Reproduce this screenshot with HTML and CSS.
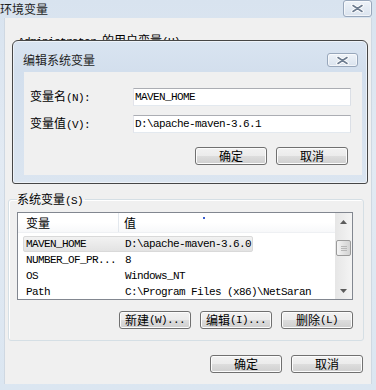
FILE: index.html
```html
<!DOCTYPE html>
<html lang="zh-CN">
<head>
<meta charset="utf-8">
<title>环境变量</title>
<link rel="stylesheet" href="styles.css">
</head>
<body>
<div class="win">
  <div class="titlebar">
    <span class="title">环境变量</span>
    <span class="close close-outer">
      <svg width="15" height="9" viewBox="0 0 15 9"><path d="M3 1.5 L12 7.5 M12 1.5 L3 7.5" stroke="#fff" stroke-width="3.4" stroke-linecap="round"/><path d="M3 1.5 L12 7.5 M12 1.5 L3 7.5" stroke="#6d7c90" stroke-width="1.6" stroke-linecap="round"/></svg>
    </span>
  </div>
  <div class="client">
    <div class="user-label"><span class="m">Administrator </span>的用户变量<span class="m">(U)</span></div>
    <div class="user-group"></div>
    <fieldset class="group">
      <legend>系统变量<span class="m">(S)</span></legend>
      <div class="list">
        <div class="lv-body">
          <div class="lv-head">
            <div class="hc1">变量</div>
            <div class="hc2">值</div>
          </div>
          <div class="lv-row sel"><div class="c1 m">MAVEN_HOME</div><div class="c2 m">D:\apache-maven-3.6.0</div></div>
          <div class="lv-row"><div class="c1 m">NUMBER_OF_PR...</div><div class="c2 m">8</div></div>
          <div class="lv-row"><div class="c1 m">OS</div><div class="c2 m">Windows_NT</div></div>
          <div class="lv-row"><div class="c1 m">Path</div><div class="c2 m">C:\Program Files (x86)\NetSaran</div></div>
          <span class="dot"></span>
        </div>
        <div class="vscroll">
          <div class="arrow"><svg width="7" height="4" viewBox="0 0 7 4"><path d="M0 4 L3.5 0 L7 4 Z" fill="#5b5b5b"/></svg></div>
          <div class="thumb"><span></span><span></span><span></span></div>
          <div class="track"></div>
          <div class="arrow"><svg width="7" height="4" viewBox="0 0 7 4"><path d="M0 0 L7 0 L3.5 4 Z" fill="#5b5b5b"/></svg></div>
        </div>
      </div>
      <div class="btnrow">
        <button class="btn">新建<span class="m">(W)...</span></button>
        <button class="btn">编辑<span class="m">(I)...</span></button>
        <button class="btn">删除<span class="m">(L)</span></button>
      </div>
    </fieldset>
    <div class="btnrow bottom">
      <button class="btn">确定</button>
      <button class="btn">取消</button>
    </div>
  </div>

  <div class="dlg">
    <div class="dlg-title">
      <span class="dlg-caption">编辑系统变量</span>
      <span class="close close-dlg">
        <svg width="15" height="9" viewBox="0 0 15 9"><path d="M3 1.5 L12 7.5 M12 1.5 L3 7.5" stroke="#fff" stroke-width="3.4" stroke-linecap="round"/><path d="M3 1.5 L12 7.5 M12 1.5 L3 7.5" stroke="#6d7c90" stroke-width="1.6" stroke-linecap="round"/></svg>
      </span>
    </div>
    <div class="dlg-client">
      <div class="field">
        <label class="lbl">变量名<span class="m">(N):</span></label>
        <input class="tb m" type="text" value="MAVEN_HOME">
      </div>
      <div class="field second">
        <label class="lbl">变量值<span class="m">(V):</span></label>
        <input class="tb m" type="text" value="D:\apache-maven-3.6.1">
      </div>
      <div class="btnrow dlg-btns">
        <button class="btn">确定</button>
        <button class="btn">取消</button>
      </div>
    </div>
  </div>
</div>
</body>
</html>
```

FILE: styles.css
```css
* { box-sizing: border-box; }
html, body { margin: 0; padding: 0; }
body {
  width: 376px;
  height: 390px;
  overflow: hidden;
  font: 12px/14px "Noto Sans CJK SC", sans-serif;
  color: #000;
  background: #dfe8f2;
}
.m {
  font-family: "Liberation Mono", "Noto Sans CJK SC", monospace;
  font-size: 11px;
  letter-spacing: -0.6px;
}

/* outer window */
.win {
  position: relative;
  width: 376px;
  height: 390px;
  display: flex;
  flex-direction: column;
  padding: 0 4px 6px 4px;
  background: linear-gradient(#d8e3ef, #e2eaf3 40%, #dbe6f1);
}
.titlebar {
  height: 18px;
  margin: 0 -4px;
  padding-right: 4px;
  display: flex;
  align-items: center;
  justify-content: space-between;
}
.title { color: #1e1e1e; }
.close {
  display: flex;
  align-items: center;
  justify-content: center;
  border: 1px solid #98a7bb;
  border-radius: 3px;
  background: linear-gradient(#eef3f9, #dae3ee);
  box-shadow: inset 0 0 0 1px rgba(255,255,255,.6);
}
.close-outer { width: 29px; height: 17px; margin-top: -1px; }

.client {
  flex: 1;
  background: #f0f0f0;
  border-left: 1px solid #cfd8e2;
  border-right: 1px solid #cfd8e2;
  display: flex;
  flex-direction: column;
}
.user-label { margin: 15px 0 0 13px; height: 14px; }
.user-group { height: 145px; }

/* group box */
.group {
  margin: 0 7px 0 3px;
  padding: 0 10px 11px 8px;
  border: 1px solid #d5dfe5;
  border-radius: 3px;
  box-shadow: inset 1px 1px 0 #fff;
  min-width: 0;
}
.group legend {
  padding: 0 2px 0 0;
  margin: 0;
  height: 14px;
}

/* list view */
.list {
  margin-top: 6px;
  height: 88px;
  border: 1px solid #828790;
  background: #fff;
  display: flex;
}
.lv-body {
  position: relative;
  flex: 1;
  overflow: hidden;
}
.lv-head {
  display: flex;
  height: 20px;
  background: linear-gradient(#fff, #fff 50%, #f7f8fa);
  border-bottom: 1px solid #eef0f3;
}
.hc1 {
  width: 101px;
  padding-left: 8px;
  line-height: 20px;
  border-right: 1px solid #e3e8ee;
}
.hc2 {
  padding-left: 5px;
  line-height: 20px;
}
.lv-row {
  display: flex;
  height: 16px;
  margin-left: 5px;
  white-space: nowrap;
  line-height: 16px;
}
.lv-row.sel {
  margin-top: 3px;
  width: 230px;
  background: linear-gradient(#f2f2f2, #e3e3e3);
  border: 1px solid #d9d9d9;
  border-radius: 2px;
  line-height: 14px;
}
.lv-row.sel .c1 { width: 95px; padding-left: 2px; }
.c1 { width: 96px; padding-left: 3px; flex: none; }
.c2 { padding-left: 6px; }
.dot {
  position: absolute;
  left: 185px;
  top: 4px;
  width: 2px;
  height: 2px;
  background: #3b5fd0;
}

/* scrollbar */
.vscroll {
  width: 17px;
  display: flex;
  flex-direction: column;
  background: linear-gradient(to right, #e6e6e6, #f4f4f4);
}
.arrow {
  height: 17px;
  display: flex;
  align-items: center;
  justify-content: center;
}
.thumb {
  margin: 10px 1px 0 1px;
  height: 16px;
  border: 1px solid #9b9b9b;
  border-radius: 2px;
  background: linear-gradient(to right, #f5f5f5, #e2e2e2 50%, #d3d3d3);
  display: flex;
  flex-direction: column;
  align-items: center;
  justify-content: center;
  gap: 1px;
}
.thumb span { width: 6px; height: 1px; background: #b7b7b7; }
.track { flex: 1; }

/* buttons */
.btnrow {
  display: flex;
  justify-content: flex-end;
  gap: 9px;
  margin-top: 11px;
}
.btnrow.bottom { margin-top: 14px; padding-right: 8px; }
.btn {
  width: 72px;
  height: 18px;
  padding: 0;
  font: inherit;
  line-height: 14px;
  color: #000;
  border: 1px solid #707070;
  border-radius: 3px;
  background: linear-gradient(#f2f2f2, #ebebeb 50%, #dddddd 51%, #cfcfcf);
  box-shadow: inset 0 0 0 1px #fcfcfc;
  display: flex;
  align-items: center;
  justify-content: center;
}

/* edit dialog */
.dlg {
  position: absolute;
  left: 12px;
  top: 40px;
  width: 356px;
  height: 144px;
  border: 1px solid #464646;
  border-radius: 6px 6px 3px 3px;
  background: linear-gradient(#d9e4f1, #d3dfed 30px, #dbe5f0);
  box-shadow: inset 0 0 0 1px rgba(255,255,255,.55);
  padding: 0 5px 8px 11px;
  display: flex;
  flex-direction: column;
}
.dlg-title {
  height: 31px;
  padding-top: 7px;
  display: flex;
  align-items: center;
  justify-content: space-between;
}
.dlg-caption { margin-left: -1px; color: #1e1e1e; }
.close-dlg { width: 31px; height: 14px; margin-right: 4px; }
.dlg-client {
  flex: 1;
  background: #f0f0f0;
  padding: 16px 11px 10px 6px;
  display: flex;
  flex-direction: column;
}
.field {
  display: flex;
  align-items: center;
  height: 18px;
}
.field.second { margin-top: 9px; }
.lbl { width: 103px; flex: none; }
.tb {
  flex: 1;
  min-width: 0;
  height: 18px;
  margin: 0;
  padding: 0 0 0 1px;
  border: 1px solid;
  border-color: #abadb3 #dbdfe6 #e3e9ef #e2e3ea;
  background: #fff;
  color: #000;
  outline: none;
}
.dlg-btns { margin-top: 14px; padding-right: 3px; }
```
